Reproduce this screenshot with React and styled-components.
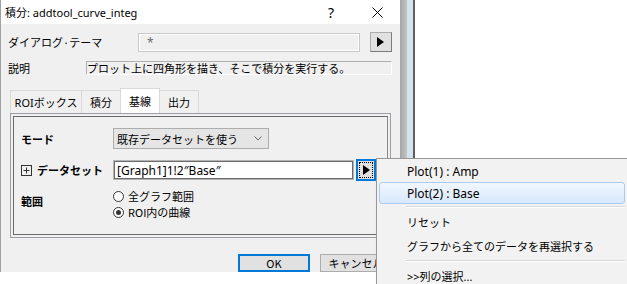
import styled, { createGlobalStyle } from 'styled-components';

const Global = createGlobalStyle`
  html, body { margin: 0; padding: 0; background: #fff; }
  body {
    font-family: "Noto Sans", "Noto Sans CJK JP", sans-serif;
    font-size: 11.5px;
    color: #000;
  }
`;

const Stage = styled.div`
  position: relative;
  width: 627px;
  height: 284px;
  overflow: hidden;
  display: flex;
  background: #fff;
`;

const Dialog = styled.div`
  width: 399px;
  height: 272px;
  border-left: 1px solid #a0a0a0;
  display: flex;
  flex-direction: column;
  flex-shrink: 0;
`;

const TitleBar = styled.div`
  height: 24px;
  background: #fff;
  display: flex;
  align-items: center;
  padding-left: 4px;
  font-size: 11px;
`;

const Title = styled.div`
  flex: 1;
`;

const TitleButton = styled.div`
  width: 46px;
  height: 24px;
  display: flex;
  align-items: center;
  justify-content: center;
  font-size: 14px;
`;

const Body = styled.div`
  flex: 1;
  background: #f0f0f0;
  padding: 8px 8px 0 7px;
  display: flex;
  flex-direction: column;
`;

const FieldRow = styled.div`
  display: flex;
  align-items: center;
  margin-top: ${p => p.$top || 0}px;
  height: ${p => p.$h}px;
`;

const Label = styled.div`
  width: ${p => p.$w}px;
  flex-shrink: 0;
  font-family: "Noto Sans CJK JP", sans-serif;
  font-size: 11px;
`;

const ThemeBox = styled.div`
  width: 219px;
  height: 17px;
  border: 1px solid #c9c9c9;
  box-shadow: inset 0 0 0 1px #fff;
  display: flex;
  align-items: center;
  padding-left: 8px;
  color: #6d6d6d;
  font-size: 12px;
  box-sizing: content-box;
`;

const PushButton = styled.div`
  width: ${p => p.$w}px;
  height: ${p => p.$h}px;
  margin-left: ${p => p.$ml || 0}px;
  box-sizing: border-box;
  border: 1px solid #adadad;
  border-right-color: #7a7a7a;
  border-bottom-color: #7a7a7a;
  background: #e1e1e1;
  display: flex;
  align-items: center;
  justify-content: center;
`;

const StaticBox = styled.div`
  width: 306px;
  height: 14px;
  box-sizing: border-box;
  border: 1px solid #fff;
  border-top-color: #b0b0b0;
  border-left-color: #b0b0b0;
  display: flex;
  align-items: center;
  font-family: "Noto Sans CJK JP", sans-serif;
  font-size: 11px;
  line-height: 12px;
  white-space: nowrap;
  overflow: hidden;
`;

const TabStrip = styled.div`
  display: flex;
  align-items: flex-end;
  margin-top: 13px;
  padding-left: 3px;
  height: 25px;
`;

const Tab = styled.div`
  width: ${p => p.$w}px;
  height: ${p => (p.$active ? 25 : 23)}px;
  box-sizing: border-box;
  border: 1px solid #d9d9d9;
  border-bottom: none;
  margin-left: -1px;
  background: ${p => (p.$active ? '#fff' : '#f0f0f0')};
  display: flex;
  align-items: center;
  justify-content: center;
  font-family: "Noto Sans", "Noto Sans CJK JP", sans-serif;
  font-size: 11px;
  position: relative;
  z-index: ${p => (p.$active ? 1 : 0)};
`;

const TabPanel = styled.div`
  margin-left: 2px;
  width: 381px;
  height: 125px;
  box-sizing: border-box;
  border: 1px solid #9d9da6;
  padding: 2px;
`;

const Group = styled.div`
  height: 100%;
  box-sizing: border-box;
  border: 1px solid #6a6a6a;
  border-right-color: #8a8a8a;
  padding: 11px 0 0 7px;
  display: grid;
  grid-template-columns: 92px 1fr;
  grid-template-rows: 21px 22px auto;
  row-gap: 10px;
  align-items: center;
`;

const BoldLabel = styled.div`
  font-family: "Noto Sans CJK JP", sans-serif;
  font-weight: 700;
  font-size: 11px;
  display: flex;
  align-items: center;
  gap: 5px;
  align-self: ${p => (p.$top ? 'start' : 'center')};
  margin-top: ${p => (p.$top ? 2 : 0)}px;
`;

const Combo = styled.div`
  width: 156px;
  height: 21px;
  box-sizing: border-box;
  border: 1px solid #adadad;
  background: #e5e5e5;
  display: flex;
  align-items: center;
  padding: 0 6px 0 3px;
  font-family: "Noto Sans CJK JP", sans-serif;
  font-size: 11px;
  justify-content: space-between;
`;

const DataRow = styled.div`
  display: flex;
  align-items: center;
  gap: 2px;
`;

const TextInput = styled.div`
  width: 241px;
  height: 20px;
  box-sizing: border-box;
  border: 1px solid #b4b4b4;
  box-shadow: inset 0 0 0 1px #6b6b6b;
  background: #fff;
  display: flex;
  align-items: center;
  padding-left: 3px;
  font-size: 12px;
`;

const FocusButton = styled.div`
  width: 20px;
  height: 22px;
  box-sizing: border-box;
  border: 2px solid #0078d7;
  background: #e1e1e1;
  padding: 1px;
  display: flex;
`;

const FocusRect = styled.div`
  flex: 1;
  border: 1px dotted #000;
  display: flex;
  align-items: center;
  justify-content: center;
`;

const RadioList = styled.div`
  display: flex;
  flex-direction: column;
  gap: 2px;
  align-self: start;
  margin-top: -2px;
`;

const RadioItem = styled.div`
  display: flex;
  align-items: center;
  gap: 4px;
  height: 14px;
  font-family: "Noto Sans CJK JP", sans-serif;
  font-size: 11px;
`;

const RadioCircle = styled.span`
  width: 11px;
  height: 11px;
  box-sizing: border-box;
  border: 1px solid #333;
  border-radius: 50%;
  background: #fff;
  display: flex;
  align-items: center;
  justify-content: center;
  &::after {
    content: '';
    width: 5px;
    height: 5px;
    border-radius: 50%;
    background: ${p => (p.$checked ? '#333' : 'transparent')};
  }
`;

const Footer = styled.div`
  display: flex;
  justify-content: flex-end;
  gap: 10px;
  margin-top: 16px;
`;

const DialogButton = styled.div`
  width: 72px;
  height: 18px;
  box-sizing: border-box;
  border: ${p => (p.$default ? '2px solid #0078d7' : '1px solid #adadad')};
  background: #e1e1e1;
  display: flex;
  align-items: center;
  justify-content: center;
  font-family: "Noto Sans CJK JP", sans-serif;
  font-size: 11px;
  white-space: nowrap;
  overflow: hidden;
`;

const WindowEdge = styled.div`
  width: 15px;
  flex-shrink: 0;
  background: linear-gradient(
    to right,
    #a4a4a4 0,
    #b3b3b3 3px,
    #c4c4c4 7px,
    #d6e2f0 7px,
    #d6e2f0 13px,
    #5e5e5e 13px
  );
`;

const Menu = styled.div`
  position: absolute;
  left: 376px;
  top: 158px;
  width: 260px;
  height: 140px;
  box-sizing: border-box;
  border: 1px solid #979797;
  background: #f2f2f2;
  padding: 1px 0 0 2px;
  box-shadow: 1px 1px 2px rgba(0, 0, 0, 0.15);
`;

const MenuItem = styled.div`
  height: ${p => (p.$tall ? 24 : 22)}px;
  width: 246px;
  box-sizing: border-box;
  display: flex;
  align-items: center;
  padding-left: 27px;
  font-family: "Noto Sans", "Noto Sans CJK JP", sans-serif;
  font-size: ${p => (p.$tall ? 11 : 12)}px;
  border: 1px solid ${p => (p.$hot ? '#a9cbee' : 'transparent')};
  border-radius: 3px;
  background: ${p => (p.$hot ? 'linear-gradient(#f1f7fe, #d8e8fb)' : 'transparent')};
`;

const MenuSep = styled.div`
  height: 6px;
  margin-left: 27px;
  width: 219px;
  display: flex;
  align-items: center;
  &::after {
    content: '';
    flex: 1;
    height: 1px;
    background: #d7d7d7;
    border-bottom: 1px solid #fff;
  }
`;

const Arrow = () => (
  <svg width="7" height="10" viewBox="0 0 7 10">
    <path d="M0 0 L7 5 L0 10 Z" fill="#000" />
  </svg>
);

const CloseIcon = () => (
  <svg width="11" height="11" viewBox="0 0 11 11">
    <path d="M0.5 0.5 L10.5 10.5 M10.5 0.5 L0.5 10.5" stroke="#000" strokeWidth="1" />
  </svg>
);

const Chevron = () => (
  <svg width="8" height="5" viewBox="0 0 8 5">
    <path d="M0.5 0.5 L4 4 L7.5 0.5" stroke="#666" strokeWidth="1" fill="none" />
  </svg>
);

const Expand = () => (
  <svg width="11" height="11" viewBox="0 0 11 11">
    <rect x="0.5" y="0.5" width="10" height="10" fill="none" stroke="#333" />
    <path d="M2.5 5.5 H8.5 M5.5 2.5 V8.5" stroke="#333" />
  </svg>
);

export default function App() {
  return (
    <>
      <Global />
      <Stage>
        <Dialog>
          <TitleBar>
            <Title>積分: addtool_curve_integ</Title>
            <TitleButton>?</TitleButton>
            <TitleButton><CloseIcon /></TitleButton>
          </TitleBar>
          <Body>
            <FieldRow $h={20}>
              <Label $w={130}>ダイアログ·テーマ</Label>
              <ThemeBox>*</ThemeBox>
              <PushButton $w={23} $h={20} $ml={10}><Arrow /></PushButton>
            </FieldRow>
            <FieldRow $h={14} $top={9}>
              <Label $w={78}>説明</Label>
              <StaticBox>プロット上に四角形を描き、そこで積分を実行する。</StaticBox>
            </FieldRow>
            <TabStrip>
              <Tab $w={72}>ROIボックス</Tab>
              <Tab $w={40}>積分</Tab>
              <Tab $w={40} $active>基線</Tab>
              <Tab $w={40}>出力</Tab>
            </TabStrip>
            <TabPanel>
              <Group>
                <BoldLabel>モード</BoldLabel>
                <Combo>既存データセットを使う<Chevron /></Combo>
                <BoldLabel><Expand />データセット</BoldLabel>
                <DataRow>
                  <TextInput>[Graph1]1!2″Base″</TextInput>
                  <FocusButton><FocusRect><Arrow /></FocusRect></FocusButton>
                </DataRow>
                <BoldLabel $top>範囲</BoldLabel>
                <RadioList>
                  <RadioItem><RadioCircle />全グラフ範囲</RadioItem>
                  <RadioItem><RadioCircle $checked />ROI内の曲線</RadioItem>
                </RadioList>
              </Group>
            </TabPanel>
            <Footer>
              <DialogButton $default>OK</DialogButton>
              <DialogButton>キャンセル</DialogButton>
            </Footer>
          </Body>
        </Dialog>
        <WindowEdge />
        <Menu>
          <MenuItem>Plot(1) : Amp</MenuItem>
          <MenuItem $hot>Plot(2) : Base</MenuItem>
          <MenuSep />
          <MenuItem $tall>リセット</MenuItem>
          <MenuItem $tall>グラフから全てのデータを再選択する</MenuItem>
          <MenuSep />
          <MenuItem $tall>&gt;&gt;列の選択...</MenuItem>
        </Menu>
      </Stage>
    </>
  );
}
